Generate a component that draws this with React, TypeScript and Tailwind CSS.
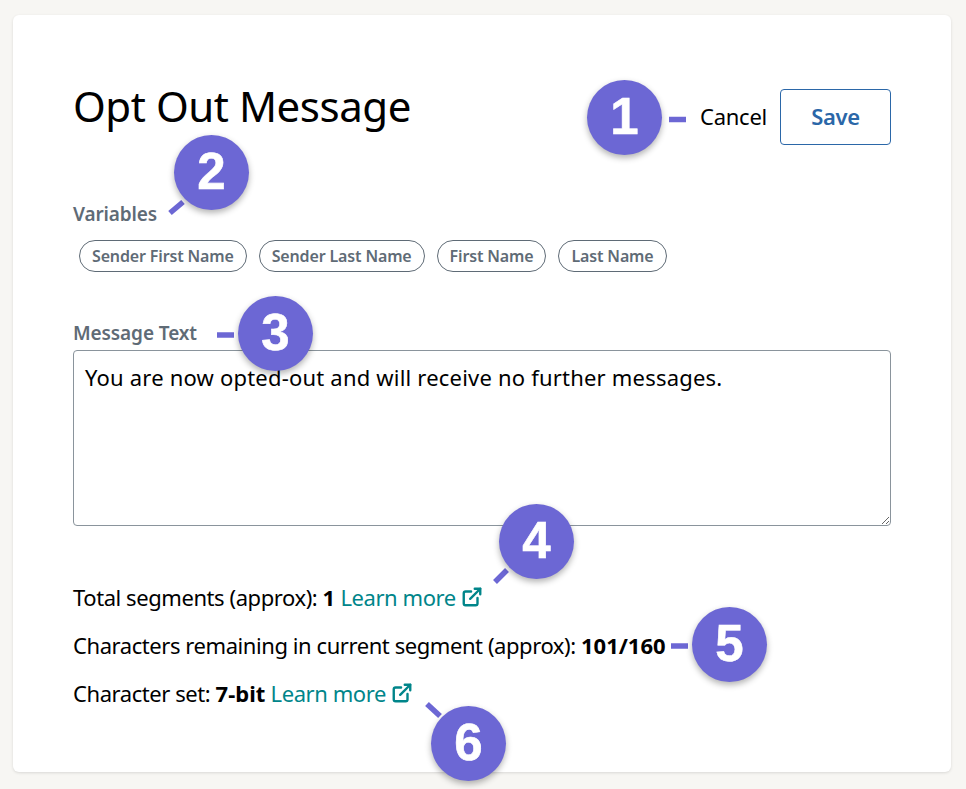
import { ExternalLink } from "lucide-react";

const variables = ["Sender First Name", "Sender Last Name", "First Name", "Last Name"];

const callouts = [
  { n: 1, cls: "left-[587px] top-[80px]" },
  { n: 2, cls: "left-[174px] top-[135px]" },
  { n: 3, cls: "left-[238px] top-[296px]" },
  { n: 4, cls: "left-[499px] top-[504px]" },
  { n: 5, cls: "left-[692px] top-[607px]" },
  { n: 6, cls: "left-[431px] top-[706px]" },
];

function LearnMore() {
  return (
    <a className="inline-flex items-center gap-[5px] text-[#00858a]">
      Learn more
      <ExternalLink size={22} strokeWidth={2.6} />
    </a>
  );
}

export default function App() {
  return (
    <div className="relative h-[789px] overflow-hidden bg-[#f7f6f3] pl-[13px] pr-[15px] pt-[15px] font-['Noto_Sans',sans-serif] text-black">
      <div className="h-[757px] rounded-md bg-white px-[60px] pt-[63px] shadow-[0_1px_3px_rgba(0,0,0,0.12)]">
        <div className="flex items-start justify-between">
          <h1 className="text-[42px] leading-[56px] tracking-[-0.45px]">Opt Out Message</h1>
          <div className="mt-[11px] flex items-center gap-[13px]">
            <button className="pb-[2px] text-[22px] tracking-[-0.25px]">Cancel</button>
            <button className="h-[56px] w-[111px] rounded border border-[#2b67a8] pb-[2px] text-[22px] font-semibold tracking-[-0.3px] text-[#2b67a8]">
              Save
            </button>
          </div>
        </div>

        <div className="mt-[56px] text-[19px] leading-[26px] font-semibold tracking-[-0.15px] text-[#5f6b76]">Variables</div>
        <div className="mt-[13px] flex gap-3 pl-[6px]">
          {variables.map((v) => (
            <span
              key={v}
              className="flex h-8 items-center rounded-full border border-[#5f6b76] px-3 text-[16px] font-semibold tracking-[-0.15px] text-[#5f6b76]"
            >
              {v}
            </span>
          ))}
        </div>

        <div className="mt-[48px] text-[19px] leading-[26px] font-semibold tracking-[-0.1px] text-[#5f6b76]">Message Text</div>
        <textarea
          defaultValue="You are now opted-out and will receive no further messages."
          className="mt-[4px] block h-[176px] w-full rounded border border-[#8a949c] px-[11px] py-[10px] text-[22px] leading-[32px] tracking-[0.2px] text-black outline-none"
        />

        <div className="mt-[55px] flex flex-col gap-[16px] text-[22px] leading-8 tracking-[-0.43px]">
          <p>
            Total segments (approx): <b className="tracking-normal">1</b> <LearnMore />
          </p>
          <p>
            Characters remaining in current segment (approx): <b className="tracking-normal">101/160</b>
          </p>
          <p>
            Character set: <b className="tracking-normal">7-bit</b> <LearnMore />
          </p>
        </div>
      </div>

      {/* annotation dashes */}
      <svg className="absolute inset-0 h-[789px] w-[966px]" viewBox="0 0 966 789">
        <g stroke="#6c67d4" strokeWidth="5.5">
          <line x1="669" y1="119.5" x2="686" y2="119.5" />
          <line x1="170" y1="213" x2="183" y2="202" />
          <line x1="217" y1="335" x2="234" y2="335" />
          <line x1="495" y1="582" x2="507" y2="570" />
          <line x1="671" y1="646" x2="688" y2="646" />
          <line x1="427" y1="704" x2="440" y2="716" />
        </g>
      </svg>

      {callouts.map((c) => (
        <div
          key={c.n}
          className={`absolute ${c.cls} flex h-[75px] w-[75px] items-center justify-center rounded-full bg-[#6c67d4] font-['Liberation_Sans',sans-serif] text-[51px] font-bold text-white shadow-[0_3px_6px_rgba(0,0,0,0.3)] [-webkit-text-stroke:0.6px_white]`}
        >
          {c.n}
        </div>
      ))}
    </div>
  );
}
